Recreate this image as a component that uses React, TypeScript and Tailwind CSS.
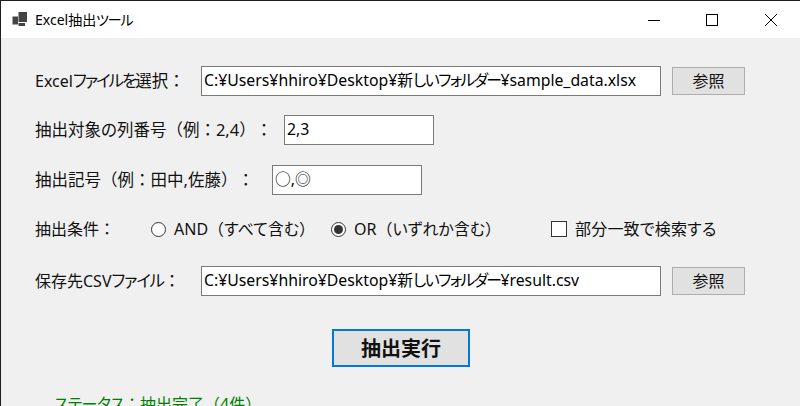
const font = "[font-family:'Noto_Sans','Noto_Sans_CJK_JP',sans-serif]";

function K({ children }: { children: string }) {
  return <span className="[font-feature-settings:'palt']">{children}</span>;
}

function T({ children }: { children: string }) {
  return <span className="[font-feature-settings:'palt'] tracking-[-1.2px]">{children}</span>;
}

function FieldKana({ children }: { children: string }) {
  return <span className="[font-feature-settings:'palt'] tracking-[-1.6px]">{children}</span>;
}

function Field({ children, width }: { children: React.ReactNode; width: string }) {
  return (
    <div className={`${width} h-[30px] flex items-center bg-white border border-[#7a7a7a] pl-[2px] text-[15.8px] text-black whitespace-nowrap overflow-hidden`}>
      <span>{children}</span>
    </div>
  );
}

function Browse() {
  return (
    <div className="ml-[11px] w-[73px] h-[28px] flex items-center justify-center bg-[#e1e1e1] border border-[#adadad] text-[16px] text-[#111]">
      参照
    </div>
  );
}

export default function App() {
  return (
    <div className={`w-[800px] h-[406px] overflow-hidden flex flex-col bg-[#f0f0f0] border-l border-t border-[#1f1f1f] [text-spacing-trim:space-all] ${font}`}>
      <div className="h-[37px] shrink-0 bg-white flex items-center">
        <svg width="16" height="16" viewBox="0 0 16 16" className="ml-[11px]" fill="#444">
          <rect x="0.5" y="4.5" width="5.5" height="8" />
          <rect x="6.5" y="0" width="8.5" height="10" />
          <rect x="6.5" y="11" width="6.5" height="3" />
        </svg>
        <span className="ml-[7px] text-[14px] text-black">Excel抽出<T>ツール</T></span>
        <div className="ml-auto flex items-center text-black">
          <svg width="14" height="14" viewBox="0 0 14 14" className="mr-[44px]" fill="none" stroke="#000">
            <path d="M1 7.5H13" />
          </svg>
          <svg width="14" height="14" viewBox="0 0 14 14" className="mr-[45px]" fill="none" stroke="#000">
            <rect x="1.5" y="1.5" width="11" height="11" />
          </svg>
          <svg width="14" height="14" viewBox="0 0 14 14" className="mr-[22px]" fill="none" stroke="#000">
            <path d="M1 1L13 13M13 1L1 13" />
          </svg>
        </div>
      </div>

      <div className="flex-1 pl-[34px] text-[16px] text-[#111]">
        <div className="mt-[28px] flex items-center h-[30px]">
          <span className="w-[166px] whitespace-nowrap text-[16.5px]"><span className="text-[16px]">Excel</span><span className="[font-feature-settings:'palt'] tracking-[-2px]">ファイルを</span>選択：</span>
          <Field width="w-[460px]">C:¥Users¥hhiro¥Desktop¥新<FieldKana>しいフォルダー</FieldKana>¥sample_data.xlsx</Field>
          <Browse />
        </div>

        <div className="mt-[19px] flex items-center h-[30px]">
          <span className="w-[249px] whitespace-nowrap text-[16.5px]">抽出対象<K>の</K>列番号（例：2,4）：</span>
          <Field width="w-[150px]">2,3</Field>
        </div>

        <div className="mt-[20px] flex items-center h-[30px]">
          <span className="w-[237px] whitespace-nowrap text-[16.5px]">抽出記号（例：田中,佐藤）：</span>
          <Field width="w-[150px]">○,◎</Field>
        </div>

        <div className="mt-[19px] flex items-center h-[30px]">
          <span className="w-[116px] whitespace-nowrap">抽出条件：</span>
          <span className="w-[15px] h-[15px] rounded-full border border-[#333] bg-white" />
          <span className="ml-[8px] w-[157px] whitespace-nowrap">AND（<K>すべて</K>含<K>む</K>）</span>
          <span className="w-[15px] h-[15px] rounded-full border border-[#333] bg-white flex items-center justify-center">
            <span className="w-[9px] h-[9px] rounded-full bg-[#333]" />
          </span>
          <span className="ml-[8px] w-[197px] whitespace-nowrap">OR（<K>いずれか</K>含<K>む</K>）</span>
          <span className="w-[16px] h-[16px] border border-[#333] bg-white" />
          <span className="ml-[8px] whitespace-nowrap tracking-[0.2px]">部分一致<K>で</K>検索<K>する</K></span>
        </div>

        <div className="mt-[22px] flex items-center h-[30px]">
          <span className="w-[166px] whitespace-nowrap text-[16.5px]"><span className="text-[16px]">保存先CSV</span><T>ファイル</T>：</span>
          <Field width="w-[460px]">C:¥Users¥hhiro¥Desktop¥新<FieldKana>しいフォルダー</FieldKana>¥result.csv</Field>
          <Browse />
        </div>

        <div className="mt-[33px] ml-[297px] w-[138px] h-[38px] pt-[2px] flex items-center justify-center bg-[#e1e1e1] border-2 border-[#0078d7] text-[20px] font-bold text-[#111]">
          抽出実行
        </div>

        <div className="mt-[25px] ml-[19px] text-[16px] leading-[24px] text-[#008000] whitespace-nowrap"><span className="[font-feature-settings:'palt'] tracking-[-0.6px]">ステータス</span>：抽出完了（4件）</div>
      </div>
    </div>
  );
}
